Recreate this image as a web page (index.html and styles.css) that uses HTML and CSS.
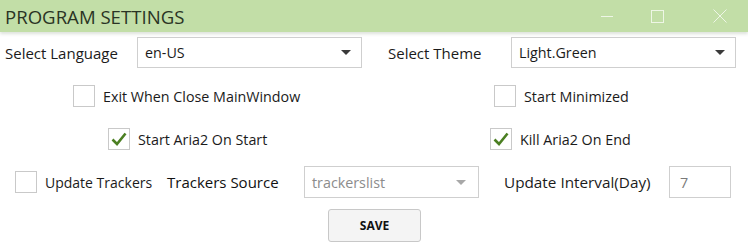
FILE: index.html
```html
<!DOCTYPE html>
<html>
<head>
<meta charset="utf-8">
<link rel="stylesheet" href="styles.css">
</head>
<body>
<div class="window">
  <div class="titlebar">
    <span class="title">PROGRAM SETTINGS</span>
    <div class="controls">
      <svg class="ctl ctl-min" width="12" height="12" viewBox="0 0 12 12"><line x1="0" y1="6.5" x2="12" y2="6.5" stroke="#eef6e6" stroke-width="1"/></svg>
      <svg class="ctl ctl-max" width="13" height="13" viewBox="0 0 13 13"><rect x="0.5" y="0.5" width="12" height="12" fill="none" stroke="#eef6e6" stroke-width="1"/></svg>
      <svg class="ctl ctl-close" width="14" height="14" viewBox="0 0 14 14"><path d="M0.5 0.5 L13.5 13.5 M13.5 0.5 L0.5 13.5" stroke="#eef6e6" stroke-width="1"/></svg>
    </div>
  </div>
  <div class="content">
    <div class="row row1">
      <span class="label lbl-lang">Select Language</span>
      <div class="combo combo-lang"><span>en-US</span><i class="arrow"></i></div>
      <span class="label lbl-theme">Select Theme</span>
      <div class="combo combo-theme"><span>Light.Green</span><i class="arrow"></i></div>
    </div>
    <div class="row row2">
      <label class="check c-exit"><span class="box"></span><span>Exit When Close MainWindow</span></label>
      <label class="check"><span class="box"></span><span>Start Minimized</span></label>
    </div>
    <div class="row row3">
      <label class="check c-aria"><span class="box checked"><svg width="16" height="14" viewBox="0 0 16 14"><path d="M1.5 7.5 L6 12 L14.5 1.5" fill="none" stroke="#4b7f22" stroke-width="2.6"/></svg></span><span>Start Aria2 On Start</span></label>
      <label class="check"><span class="box checked"><svg width="16" height="14" viewBox="0 0 16 14"><path d="M1.5 7.5 L6 12 L14.5 1.5" fill="none" stroke="#4b7f22" stroke-width="2.6"/></svg></span><span>Kill Aria2 On End</span></label>
    </div>
    <div class="row row4">
      <label class="check c-upd"><span class="box"></span><span>Update Trackers</span></label>
      <span class="label lbl-src">Trackers Source</span>
      <div class="combo combo-src disabled"><span>trackerslist</span><i class="arrow"></i></div>
      <span class="label lbl-int">Update Interval(Day)</span>
      <div class="input"><span>7</span></div>
    </div>
    <div class="row row5">
      <button class="save">SAVE</button>
    </div>
  </div>
</div>
</body>
</html>
```
FILE: styles.css
```css
html, body {
  margin: 0;
  padding: 0;
  background: #ffffff;
}
body {
  font-family: "Open Sans", "Noto Sans", sans-serif;
  font-size: 14.3px;
  color: #1b1b1b;
  width: 748px;
  height: 247px;
  overflow: hidden;
}
.titlebar {
  height: 32px;
  background: #c2dea7;
  display: flex;
  align-items: center;
  justify-content: space-between;
  box-shadow: 0 2px 3px rgba(120, 140, 110, 0.25);
  position: relative;
}
.title {
  padding-left: 5px;
  font-size: 18.6px;
  color: #2a3424;
  margin-top: 1px;
}
.controls {
  display: flex;
  align-items: center;
  height: 32px;
}
.ctl { display: block; }
.ctl-min { margin-right: 38px; }
.ctl-max { margin-right: 49px; }
.ctl-close { margin-right: 21px; }

.row {
  display: flex;
  align-items: center;
}
.row1 {
  margin-top: 5px;
  padding-left: 5px;
  height: 31px;
}
.label { white-space: nowrap; }
.lbl-lang { width: 132px; font-size: 15px; }
.lbl-theme { width: 123px; margin-left: 26px; font-size: 15px; }
.combo {
  box-sizing: border-box;
  height: 31px;
  border: 1px solid #cfcfcf;
  display: flex;
  align-items: center;
  justify-content: space-between;
  padding: 0 10px 0 7px;
  background: #fff;
}
.combo-lang, .combo-theme { width: 225px; }
.arrow {
  width: 0;
  height: 0;
  border-left: 5px solid transparent;
  border-right: 5px solid transparent;
  border-top: 5px solid #3a3a3a;
}
.combo.disabled { color: #8c8c8c; }
.combo.disabled .arrow { border-top-color: #a8a8a8; }

.check {
  display: flex;
  align-items: center;
  white-space: nowrap;
}
.box {
  box-sizing: border-box;
  width: 22px;
  height: 22px;
  border: 1px solid #c9c9c9;
  background: #fff;
  margin-right: 8px;
  display: flex;
  align-items: center;
  justify-content: center;
}
.row2 {
  margin-top: 17px;
  height: 22px;
  padding-left: 73px;
}
.c-exit { width: 421px; }
.row3 {
  margin-top: 21px;
  height: 22px;
  padding-left: 108px;
}
.c-aria { width: 382px; }
.row4 {
  margin-top: 16px;
  height: 32px;
  padding-left: 15px;
}
.c-upd { width: 152px; font-size: 14px; }
.lbl-src { width: 137px; font-size: 15px; color: #111; }
.combo-src { width: 175px; height: 32px; padding-right: 12px; }
.lbl-int { margin-left: 25px; width: 165px; font-size: 15.3px; }
.input {
  box-sizing: border-box;
  width: 62px;
  height: 32px;
  border: 1px solid #cfcfcf;
  padding-left: 10px;
  display: flex;
  align-items: center;
  color: #7a7a7a;
}
.row5 {
  margin-top: 11px;
  padding-left: 328px;
}
.save {
  box-sizing: border-box;
  width: 93px;
  height: 33px;
  border: 1px solid #c8c8c8;
  border-radius: 3px;
  background: #f4f4f4;
  font-family: "Open Sans", sans-serif;
  font-weight: 700;
  font-size: 12px;
  color: #111;
  padding: 0;
}
```
